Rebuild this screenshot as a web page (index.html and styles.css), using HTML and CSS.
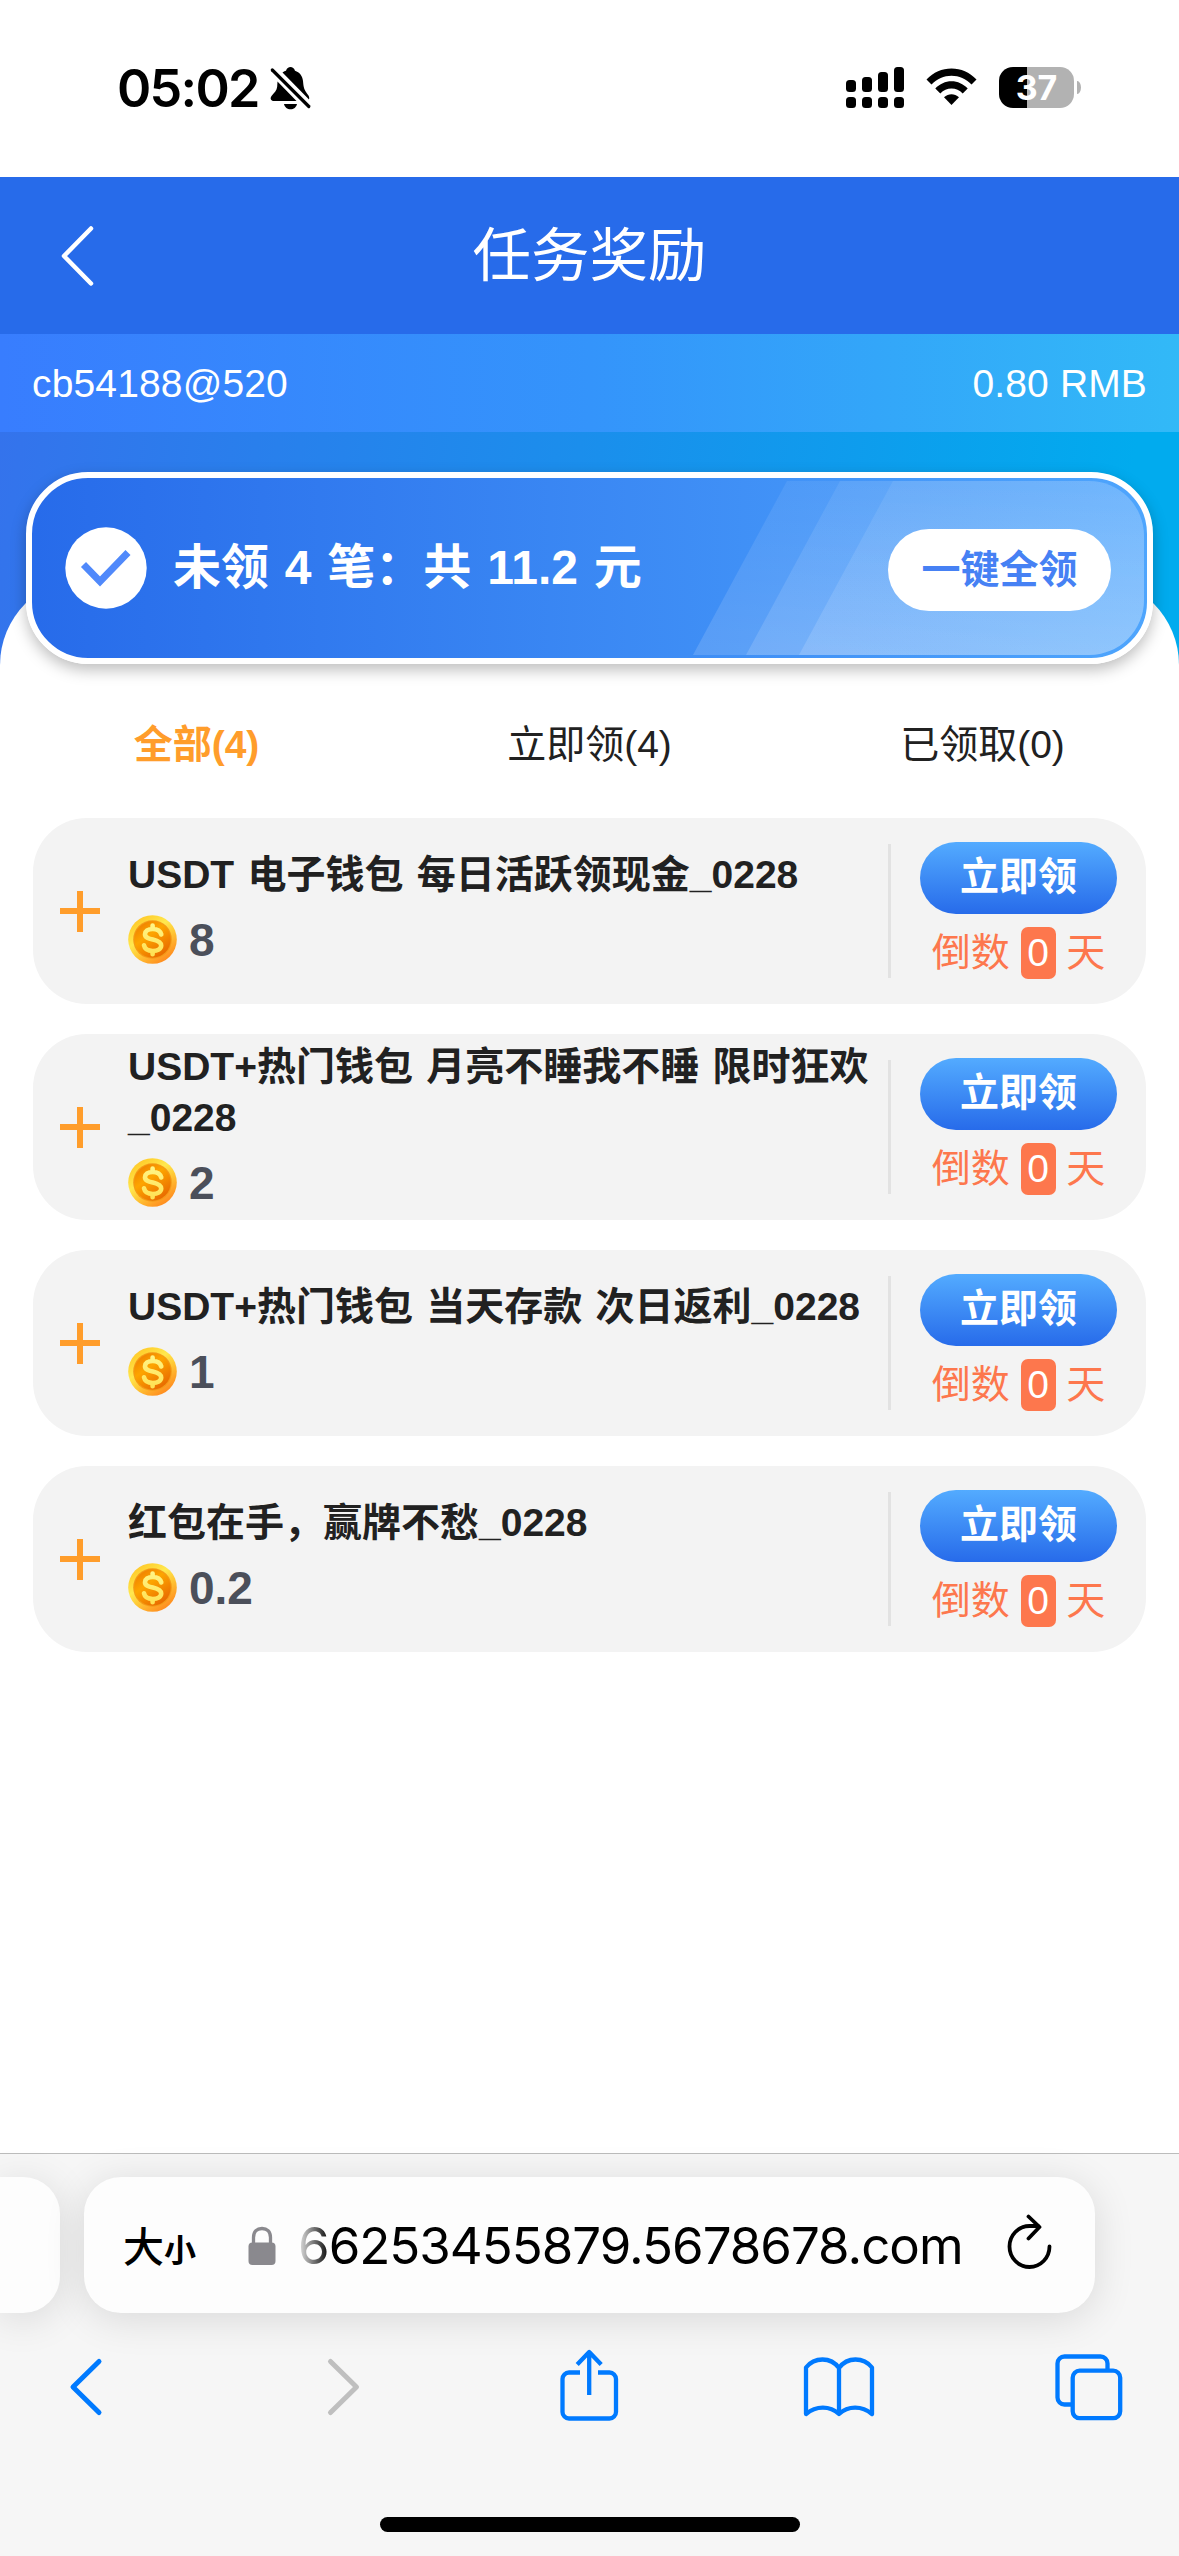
FILE: index.html
```html
<!DOCTYPE html>
<html lang="zh-CN">
<head>
<meta charset="utf-8">
<title>任务奖励</title>
<link rel="stylesheet" href="styles.css">
</head>
<body>
<svg class="defs" width="0" height="0" aria-hidden="true">
  <defs>
    <linearGradient id="coin-rim" x1="0" y1="0" x2=".7" y2="1">
      <stop offset="0" stop-color="#ffb43c"/><stop offset=".2" stop-color="#ffd02f"/><stop offset=".45" stop-color="#ffe84f"/><stop offset=".65" stop-color="#ffc936"/><stop offset="1" stop-color="#ff8a1e"/>
    </linearGradient>
    <linearGradient id="coin-face" x1=".1" y1="0" x2=".8" y2="1">
      <stop offset="0" stop-color="#ec7a00"/><stop offset=".4" stop-color="#fda500"/><stop offset="1" stop-color="#e66400"/>
    </linearGradient>
    <linearGradient id="coin-mark" gradientUnits="userSpaceOnUse" x1="0" y1="9" x2="0" y2="41">
      <stop offset="0" stop-color="#fff587"/><stop offset="1" stop-color="#ffe052"/>
    </linearGradient>
    <symbol id="coin" viewBox="0 0 49 49">
      <circle cx="24.500" cy="24.500" r="24.300" fill="url(#coin-rim)"/>
      <circle cx="24.500" cy="24.500" r="19.300" fill="#f39a18"/>
      <circle cx="24.500" cy="24.500" r="18.200" fill="url(#coin-face)"/>
      <path d="M33.300 19.500C32.300 16 29 14 24.800 14 20 14 17 16.300 17 19.200c0 3.400 3.500 4.400 7.800 5.400 4.700 1.100 8.400 2.400 8.400 6 0 3.400-3.700 5.400-8.400 5.400-4.800 0-8.100-2.200-8.800-5.700M24.600 10.500v3.500M24.600 36v3.200" fill="none" stroke="url(#coin-mark)" stroke-width="4.600" stroke-linecap="round"/>
    </symbol>
  </defs>
</svg>
<div class="phone">
  <div class="status">
    <div class="status-left">
      <span class="clock">05:02</span>
      <svg class="bell" width="42" height="44" viewBox="0 0 42 44">
        <path d="M12.500 6.500C13.500 5.500 14.500 5 16 4.700 16.800 2.200 18.500 1 20.500 1s3.700 1.200 4.500 3.700c4.600 1.500 7.500 5.300 8 10.300.5 6 1 8.500 3.800 12.200C39 30 39.600 31 39 33.500zM7.500 15.500 26.500 35H3.500c-3 0-3.600-3-2-5 3-3.500 5.300-5.500 5.700-9.500z"/>
        <path d="M14 38h13c-.7 3.300-3.300 5.300-6.500 5.300S14.700 41.300 14 38z"/>
        <path d="M2.300 4 38.800 40.500" stroke="#000" stroke-width="3.200" stroke-linecap="round"/>
      </svg>
    </div>
    <div class="status-right">
      <svg class="signal" width="58" height="41" viewBox="0 0 58 41">
        <rect x="0" y="13" width="10" height="12" rx="3.500"/><rect x="16" y="10" width="10" height="15" rx="3.500"/><rect x="32" y="5" width="10" height="20" rx="3.500"/><rect x="48" y="0" width="10" height="25" rx="3.500"/>
        <rect x="0" y="30" width="10" height="11" rx="3.500"/><rect x="16" y="30" width="10" height="11" rx="3.500"/><rect x="32" y="30" width="10" height="11" rx="3.500"/><rect x="48" y="30" width="10" height="11" rx="3.500"/>
      </svg>
      <svg class="wifi" width="51" height="38" viewBox="0 0 51 38">
        <path d="M0.500 11.500C7.500 4.300 16 .5 25.500.5s18 3.800 25 11l-5 5C40 10.800 33 7.800 25.500 7.800s-14.500 3-20 8.700z"/>
        <path d="M9.300 20.500c4.500-4.600 10-7.200 16.200-7.200s11.700 2.600 16.200 7.200l-5 5c-3.100-3.200-7-5-11.200-5s-8.100 1.800-11.200 5z"/>
        <path d="M18 29.200c4.500-4.100 10.500-4.100 15 0L25.500 37z"/>
      </svg>
      <div class="battery"><div class="battery-body">37</div><div class="battery-nub"></div></div>
    </div>
  </div>

  <header class="header">
    <svg class="back" width="34" height="60" viewBox="0 0 34 60"><path d="M31 2.500 4 30l27 27.500" fill="none" stroke="#fff" stroke-width="4.500" stroke-linecap="round" stroke-linejoin="round"/></svg>
    <h1 class="title">任务奖励</h1>
  </header>

  <div class="account"><span>cb54188@520</span><span>0.80 RMB</span></div>

  <section class="hero">
    <div class="summary">
      <svg class="shine" width="1115" height="180" viewBox="0 0 1115 180">
        <defs><linearGradient id="shine" x1="0" y1="0" x2="0" y2="1"><stop offset="0" stop-color="#fff" stop-opacity=".07"/><stop offset="1" stop-color="#fff" stop-opacity=".145"/></linearGradient></defs>
        <g fill="url(#shine)">
          <path d="M755 3h302a55 55 0 0 1 55 55v64a55 55 0 0 1-55 55H661z"/>
          <path d="M808 3h249a55 55 0 0 1 55 55v64a55 55 0 0 1-55 55H714z"/>
          <path d="M861 3h196a55 55 0 0 1 55 55v64a55 55 0 0 1-55 55H767z"/>
        </g>
      </svg>
      <svg class="check" width="82" height="82" viewBox="0 0 82 82"><circle cx="41" cy="41" r="40.700" fill="#fff"/><path d="M18.500 37.500 35 54.500 63 25.500" fill="none" stroke="#5089fb" stroke-width="7"/></svg>
      <span class="summary-text">未领 4 笔：共 11.2 元</span>
      <span class="claim-all">一键全领</span>
    </div>
  </section>

  <nav class="tabs">
    <span class="tab tab-active">全部(4)</span>
    <span class="tab">立即领(4)</span>
    <span class="tab">已领取(0)</span>
  </nav>

  <main class="list">
    <article class="card">
      <i class="plus"></i>
      <div class="info">
        <h2 class="name">USDT 电子钱包 每日活跃领现金_0228</h2>
        <div class="amount"><svg class="coin" width="49" height="49"><use href="#coin"/></svg><span>8</span></div>
      </div>
      <div class="action"><span class="claim">立即领</span><div class="countdown">倒数 <b class="days">0</b> 天</div></div>
    </article>
    <article class="card">
      <i class="plus"></i>
      <div class="info">
        <h2 class="name name-long">USDT+热门钱包 月亮不睡我不睡 限时狂欢<br>_0228</h2>
        <div class="amount"><svg class="coin" width="49" height="49"><use href="#coin"/></svg><span>2</span></div>
      </div>
      <div class="action"><span class="claim">立即领</span><div class="countdown">倒数 <b class="days">0</b> 天</div></div>
    </article>
    <article class="card">
      <i class="plus"></i>
      <div class="info">
        <h2 class="name">USDT+热门钱包 当天存款 次日返利_0228</h2>
        <div class="amount"><svg class="coin" width="49" height="49"><use href="#coin"/></svg><span>1</span></div>
      </div>
      <div class="action"><span class="claim">立即领</span><div class="countdown">倒数 <b class="days">0</b> 天</div></div>
    </article>
    <article class="card">
      <i class="plus"></i>
      <div class="info">
        <h2 class="name">红包在手，赢牌不愁_0228</h2>
        <div class="amount"><svg class="coin" width="49" height="49"><use href="#coin"/></svg><span>0.2</span></div>
      </div>
      <div class="action"><span class="claim">立即领</span><div class="countdown">倒数 <b class="days">0</b> 天</div></div>
    </article>
  </main>

  <footer class="browser">
    <div class="address-row">
      <div class="side-tab"></div>
      <div class="address">
        <span class="text-size">大<small class="small-char">小</small></span>
        <svg class="lock" width="28" height="40" viewBox="0 0 28 40"><rect x=".5" y="16.500" width="27" height="22.500" rx="4" fill="#8a898e"/><path d="M5.500 18v-6.500C5.500 5.500 9 2.500 14 2.500s8.500 3 8.500 9V18" fill="none" stroke="#8a898e" stroke-width="3.300"/></svg>
        <span class="url">66253455879.5678678.com</span>
        <svg class="reload" width="46" height="56" viewBox="0 0 46 56"><path d="M42.500 32.500A20 20.500 0 1 1 22.500 12h9M21.500 2.500 32.500 13 21.500 24.500" fill="none" stroke="#000" stroke-width="3.800" stroke-linecap="round" stroke-linejoin="round"/></svg>
      </div>
    </div>
    <div class="toolbar">
      <svg class="tool-back" width="60" height="80" viewBox="0 0 60 80"><path d="M43 14.500 17 40l26 25.500" fill="none" stroke="#007aff" stroke-width="5" stroke-linecap="round" stroke-linejoin="round"/></svg>
      <svg class="tool-forward" width="60" height="80" viewBox="0 0 60 80"><path d="M17.500 14.500 43.500 40 17.500 65.500" fill="none" stroke="#bfbfbf" stroke-width="5" stroke-linecap="round" stroke-linejoin="round"/></svg>
      <svg class="tool-share" width="60" height="80" viewBox="0 0 60 80"><path d="M21 25.500H10a6.500 6.500 0 0 0-6.500 6.500V65a6.500 6.500 0 0 0 6.500 6.500H50.500A6.500 6.500 0 0 0 57 65V32a6.500 6.500 0 0 0-6.500-6.500H39M30.200 5.500V48M18.200 17.500l12-12.500 12 12.500" fill="none" stroke="#007aff" stroke-width="4.300" stroke-linejoin="round"/></svg>
      <svg class="tool-book" width="80" height="80" viewBox="0 0 80 80"><path d="M40 21C36 15.500 30 12.500 23.500 12.500 17 12.500 11 15.500 7 20.500V67c10-8.500 24-8.500 33 0 9-8.500 23-8.500 33 0V20.500C69 15.500 63 12.500 56.500 12.500 50 12.500 44 15.500 40 21zV67" fill="none" stroke="#007aff" stroke-width="4.300" stroke-linejoin="round"/></svg>
      <svg class="tool-tabs" width="70" height="80" viewBox="0 0 70 80"><path d="M17 57.500H9.500a7 7 0 0 1-7-7V16.500a7 7 0 0 1 7-7h36a7 7 0 0 1 7 7V23" fill="none" stroke="#007aff" stroke-width="4.300"/><rect x="17.700" y="23.700" width="47.500" height="47.500" rx="7" fill="none" stroke="#007aff" stroke-width="4.300"/></svg>
    </div>
    <div class="home-indicator"></div>
  </footer>
</div>
</body>
</html>
```

FILE: styles.css
```css
* { box-sizing: border-box; }
body {
  margin: 0;
  background: #fff;
  color: #212121;
  font-family: "Liberation Sans", "Noto Sans CJK SC", sans-serif;
  font-size: 39px;
}
.defs { position: absolute; }
svg { display: block; flex: none; }
.phone { width: 1179px; height: 2556px; display: flex; flex-direction: column; overflow: hidden; }

.status { height: 177px; flex: none; display: flex; justify-content: space-between; padding: 66px 98px 0 117px; color: #000; }
.status-left, .status-right { display: flex; align-items: flex-start; }
.clock { font: 600 52px/46px Inter, sans-serif; width: 153px; letter-spacing: -1.700px; white-space: nowrap; }
.bell { margin-top: 0; }
.signal { margin: 1px 22px 0 0; }
.wifi { margin: 2px 22px 0 0; }
.battery { display: flex; align-items: center; gap: 3px; margin-top: 1px; }
.battery-body {
  width: 75px; height: 41px; border-radius: 14px; color: #fff; text-align: center;
  background: linear-gradient(90deg, #000 28px, #b2b2b2 28px);
  font: 700 34px/41px Inter, sans-serif;
}
.battery-nub { width: 4px; height: 13px; background: #b2b2b2; border-radius: 0 4px 4px 0 / 0 7px 7px 0; }

.header { height: 157px; flex: none; background: #276bea; color: #fff; display: grid; grid-template-columns: 100px 1fr 100px; align-items: center; }
.back { justify-self: end; margin-right: 6px; }
.title { margin: 0; text-align: center; font-weight: 400; font-size: 58.500px; line-height: 80px; }

.account { height: 98px; flex: none; display: flex; justify-content: space-between; align-items: center; padding: 2px 32px 0; color: #fff; letter-spacing: .15px; background: linear-gradient(90deg, #387dfe, #3494fb 50%, #32b9f7); }

.hero { height: 234px; flex: none; position: relative; padding: 40px 26px 0; background: linear-gradient(98deg, #3473ec, #1b8eec 48%, #01abee 94%); }
.hero::before { content: ""; position: absolute; left: 0; right: 0; bottom: 0; height: 88px; border-radius: 87px 87px 0 0; background: #fff; }
.summary {
  position: relative; height: 192px; border: 6px solid #fff; border-radius: 62px; overflow: hidden;
  display: flex; align-items: center; padding: 0 36px 0 33px; color: #fff;
  background: linear-gradient(90deg, #276bea, #4ea5fd);
  box-shadow: 0 6px 15px rgba(0, 0, 0, .26);
}
.shine { position: absolute; left: 0; top: 0; }
.check { margin-right: 26px; position: relative; }
.summary-text { position: relative; flex: 1; font-size: 48px; font-weight: 700; white-space: nowrap; line-height: 60px; word-spacing: 2.500px; }
.claim-all { position: relative; width: 223px; height: 82px; margin-top: 4px; border-radius: 41px; background: #fff; color: #4681f4; font-weight: 700; line-height: 82px; text-align: center; }

.tabs { flex: none; height: 152px; padding-top: 6px; display: grid; grid-template-columns: repeat(3, 1fr); align-items: center; text-align: center; line-height: 60px; }
.tab-active { color: #ff9d2b; font-weight: 700; }

.list { flex: 1; padding: 0 33px; display: flex; flex-direction: column; gap: 30px; }
.card { height: 186px; flex: none; border-radius: 54px; background: #f3f3f3; display: grid; grid-template-columns: 95px 760px 1fr; align-items: center; overflow: hidden; }
.plus { width: 40px; height: 41px; margin-left: 27px; background: linear-gradient(#ff9d2b, #ff9d2b) center / 40px 6px no-repeat, linear-gradient(#ff9d2b, #ff9d2b) center / 6px 41px no-repeat; }
.info { display: flex; flex-direction: column; }
.name { margin: 0; font-size: 39px; line-height: 51px; font-weight: 700; white-space: nowrap; word-spacing: 2.500px; }
.name-long { margin-top: 3px; }
.amount { display: flex; align-items: center; gap: 12px; height: 74px; padding-top: 6px; color: #4b4f5a; font-size: 46px; font-weight: 700; line-height: 60px; }
.action { height: 134px; border-left: 3px solid #e2e2e2; display: flex; flex-direction: column; padding-left: 29px; }
.claim { flex: none; width: 197px; height: 72px; margin-top: -2px; border-radius: 36px; background: linear-gradient(#53abff, #276bea); color: #fff; font-weight: 700; line-height: 70px; text-align: center; }
.countdown { flex: none; width: 197px; margin-top: 13px; color: #fd774d; line-height: 52px; text-align: center; white-space: nowrap; }
.days { display: inline-block; width: 35px; height: 52px; border-radius: 7px; background: #fd774d; color: #fff; font-weight: 400; }

.browser { flex: none; height: 403px; border-top: 1px solid #bcbcbc; background: #f6f6f6; display: flex; flex-direction: column; align-items: center; }
.address-row { width: 100%; height: 160px; padding-top: 23px; display: flex; gap: 24px; }
.side-tab { width: 60px; height: 136px; background: #fdfdfd; border-radius: 0 37px 37px 0; box-shadow: 0 6px 40px rgba(0, 0, 0, .12); }
.address { width: 1011px; height: 136px; padding: 2px 42px 0 39px; display: flex; align-items: center; background: #fdfdfd; border-radius: 37px; box-shadow: 0 6px 40px rgba(0, 0, 0, .12); color: #000; }
.text-size { width: 125px; font: 500 41px/50px "Noto Sans CJK SC", sans-serif; white-space: nowrap; }
.small-char { font-size: 32px; font-weight: 700; }
.lock { margin-right: 22px; }
.url { flex: 1; font: 400 51px/60px Inter, sans-serif; letter-spacing: -1px; white-space: nowrap; -webkit-mask-image: linear-gradient(90deg, rgba(0,0,0,.2) 4px, #000 32px); mask-image: linear-gradient(90deg, rgba(0,0,0,.2) 4px, #000 32px); }
.reload { margin-bottom: 8px; }
.toolbar { width: 100%; height: 146px; padding: 33px 0 0 56px; display: flex; }
.tool-forward { margin-left: 197px; }
.tool-share { margin-left: 186px; }
.tool-book { margin-left: 180px; }
.tool-tabs { margin-left: 176px; }
.home-indicator { width: 420px; height: 15px; margin-top: 57px; border-radius: 8px; background: #000; }
```
